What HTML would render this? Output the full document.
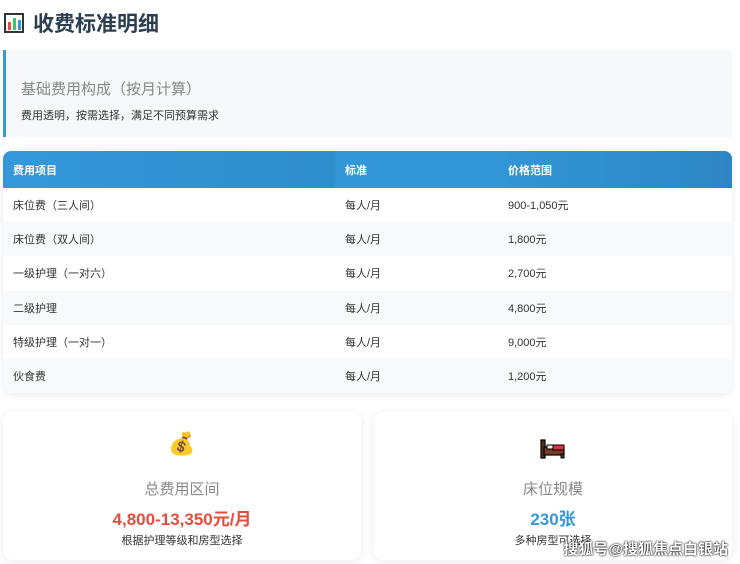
<!DOCTYPE html>
<html><head><meta charset="utf-8"><style>
*{margin:0;padding:0;box-sizing:border-box}
body{width:740px;height:564px;overflow:hidden;background:#fff;font-family:"Liberation Sans","Noto Sans CJK SC",sans-serif;color:#333;position:relative}
h1{position:absolute;left:4px;top:8px;font-size:21px;font-weight:bold;color:#2c3e50;display:flex;align-items:center}
.ico{width:20px;height:20px;border:2px solid #333;background:#fff;margin-right:9px;position:relative}
.ico i{position:absolute;bottom:1px;width:3px}
.intro{position:absolute;left:3px;top:50px;width:729px;height:87px;background:#f7f8fa;border-left:3px solid #3498db}
.intro .t{position:absolute;left:15px;top:28px;font-size:15px;color:#888}
.intro .s{position:absolute;left:15px;top:57px;font-size:11px;color:#333}
.tbl{position:absolute;left:3px;top:151px;width:729px;border-radius:8px;overflow:hidden;box-shadow:0 2px 8px rgba(0,0,0,.08)}
.row{display:flex;height:34.2px;align-items:center;font-size:11px}
.row div{padding-left:10px}
.c1{width:332px}.c2{width:163px}.c3{flex:1}
.hd{height:37px;background:linear-gradient(90deg,#3498db,#2980b9);color:#fff;font-weight:bold}
.hd .c1{height:100%;display:flex;align-items:center}
.hd .c2,.hd .c3{background:#3396d6;height:100%;display:flex;align-items:center}
.hd .c3{background:linear-gradient(90deg,#3396d6,#2d86c4)}
.row:nth-child(odd):not(.hd){background:#f8f9fa}
.card{position:absolute;top:412px;width:358px;height:148px;background:#fff;border-radius:10px;box-shadow:0 2px 10px rgba(0,0,0,.08);text-align:center}
.card .e{position:absolute;top:19px;left:0;right:0;font-size:22px}
.card .l{position:absolute;top:66px;left:0;right:0;font-size:15px;color:#888}
.card .v{position:absolute;top:93px;left:0;right:0;font-size:17px;font-weight:bold}
.card .d{position:absolute;top:120px;left:0;right:0;font-size:11px;color:#333}
.wm{position:absolute;right:12px;top:538px;font-size:15px;font-weight:bold;color:#fff;text-shadow:0 0 2px #000,0 0 1px #000}
</style></head><body>
<h1><span class="ico"><i style="left:2px;height:8px;background:#e74c3c"></i><i style="left:7px;height:12px;background:#2ecc71"></i><i style="left:12px;height:10px;background:#3498db"></i></span>收费标准明细</h1>
<div class="intro"><div class="t">基础费用构成（按月计算）</div><div class="s">费用透明，按需选择，满足不同预算需求</div></div>
<div class="tbl">
<div class="row hd"><div class="c1">费用项目</div><div class="c2">标准</div><div class="c3">价格范围</div></div>
<div class="row"><div class="c1">床位费（三人间）</div><div class="c2">每人/月</div><div class="c3">900-1,050元</div></div>
<div class="row"><div class="c1">床位费（双人间）</div><div class="c2">每人/月</div><div class="c3">1,800元</div></div>
<div class="row"><div class="c1">一级护理（一对六）</div><div class="c2">每人/月</div><div class="c3">2,700元</div></div>
<div class="row"><div class="c1">二级护理</div><div class="c2">每人/月</div><div class="c3">4,800元</div></div>
<div class="row"><div class="c1">特级护理（一对一）</div><div class="c2">每人/月</div><div class="c3">9,000元</div></div>
<div class="row"><div class="c1">伙食费</div><div class="c2">每人/月</div><div class="c3">1,200元</div></div>
</div>
<div class="card" style="left:3px"><div class="e">💰</div><div class="l">总费用区间</div><div class="v" style="color:#e74c3c">4,800-13,350元/月</div><div class="d">根据护理等级和房型选择</div></div>
<div class="card" style="left:374px">
<svg style="position:absolute;left:166px;top:27px" width="26" height="20" viewBox="0 0 26 20"><rect x="1" y="1" width="4" height="18" fill="#5a2e1e" stroke="#000" stroke-width="1.2"/><rect x="4" y="8" width="20" height="8" fill="#7a3a28" stroke="#000" stroke-width="1.2"/><rect x="7" y="6" width="6" height="4" fill="#eee" stroke="#000" stroke-width="1"/><rect x="13" y="6" width="11" height="5" fill="#e03040" stroke="#000" stroke-width="1"/><rect x="21" y="15" width="3" height="4" fill="#5a2e1e" stroke="#000" stroke-width="1"/></svg>
<div class="l">床位规模</div><div class="v" style="color:#3498db">230张</div><div class="d">多种房型可选择</div></div>
<div class="wm">搜狐号@搜狐焦点白银站</div>
</body></html>
